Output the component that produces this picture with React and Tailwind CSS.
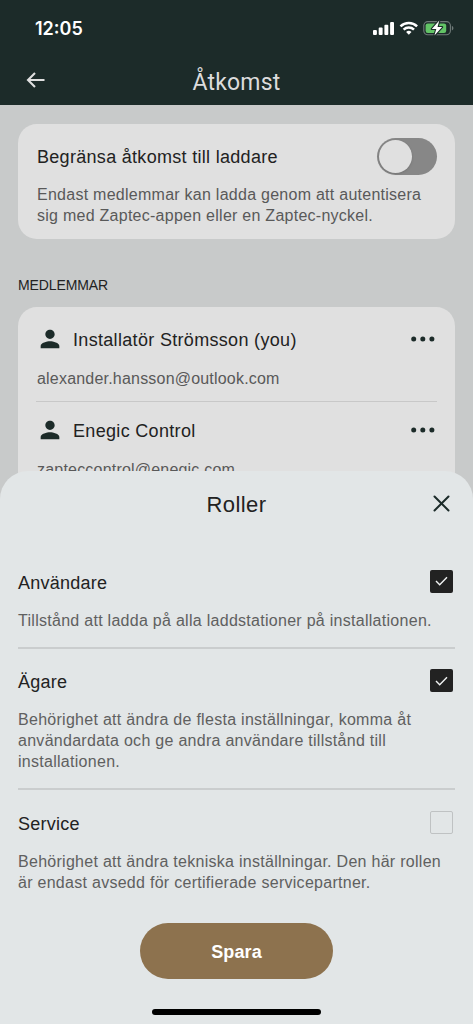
import { useState } from 'react'
import clsx from 'clsx'

const MEMBERS = [
  { name: 'Installatör Strömsson (you)', email: 'alexander.hansson@outlook.com' },
  { name: 'Enegic Control', email: 'zapteccontrol@enegic.com' },
]

const ROLES = [
  {
    id: 'user',
    title: 'Användare',
    lines: ['Tillstånd att ladda på alla laddstationer på installationen.'],
  },
  {
    id: 'owner',
    title: 'Ägare',
    lines: [
      'Behörighet att ändra de flesta inställningar, komma åt',
      'användardata och ge andra användare tillstånd till',
      'installationen.',
    ],
  },
  {
    id: 'service',
    title: 'Service',
    lines: [
      'Behörighet att ändra tekniska inställningar. Den här rollen',
      'är endast avsedd för certifierade servicepartner.',
    ],
  },
]

function StatusIcons() {
  return (
    <svg width="82" height="16" viewBox="0 0 82 16" fill="none">
      {/* Signal */}
      <g fill="#fff">
        <rect x="1" y="10" width="3.9" height="5" rx="1" />
        <rect x="6.7" y="7.6" width="3.9" height="7.4" rx="1" />
        <rect x="12.4" y="4.8" width="3.9" height="10.2" rx="1" />
        <rect x="18.1" y="2" width="3.9" height="13" rx="1" />
      </g>
      {/* Wi-Fi */}
      <g stroke="#fff" strokeWidth="2.5">
        <path d="M28.5 6.3a12 12 0 0 1 16.6 0" />
        <path d="M31.6 9.7a7.5 7.5 0 0 1 10.4 0" />
      </g>
      <path d="M36.8 14.8l-2.7-2.8a4 4 0 0 1 5.4 0z" fill="#fff" />
      {/* Battery, charging */}
      <rect x="51.8" y="1.6" width="26.6" height="13.2" rx="4" stroke="#6f7a78" strokeWidth="1.1" />
      <path d="M79.9 6v4.4c1-.4 1.5-1.2 1.5-2.2s-.5-1.8-1.5-2.2z" fill="#6f7a78" />
      <rect x="53.6" y="3.4" width="20.6" height="9.6" rx="2.2" fill="#62c466" />
      <path
        d="M67.3.6l-7.5 8.4h4.5l-1.9 6.6 7.7-8.5h-4.6z"
        fill="#fff"
        stroke="#1c2b29"
        strokeWidth="2.2"
        strokeLinejoin="round"
        paintOrder="stroke"
      />
    </svg>
  )
}

function ArrowLeft() {
  return (
    <svg width="20" height="16" viewBox="0 0 20 16" fill="none" stroke="#e0e0e0" strokeWidth="2.1">
      <path d="M9 1L2 8l7 7M2 8h16.5" />
    </svg>
  )
}

function PersonIcon() {
  return (
    <svg width="28" height="28" viewBox="0 0 24 24" fill="#1c2b29">
      <path d="M12 12c2.21 0 4-1.79 4-4s-1.79-4-4-4-4 1.79-4 4 1.79 4 4 4zm0 2c-2.67 0-8 1.34-8 4v2h16v-2c0-2.66-5.33-4-8-4z" />
    </svg>
  )
}

function MoreIcon() {
  return (
    <svg width="26" height="6" viewBox="0 0 26 6" fill="#1c2b29">
      <circle cx="2.7" cy="3" r="2.5" />
      <circle cx="11.8" cy="3" r="2.5" />
      <circle cx="20.9" cy="3" r="2.5" />
    </svg>
  )
}

function Checkbox({ checked, onChange }) {
  return (
    <button
      type="button"
      role="checkbox"
      aria-checked={checked}
      onClick={onChange}
      className={clsx(
        'flex h-[23px] w-[23px] shrink-0 items-center justify-center rounded-[2px]',
        checked ? 'bg-[#222222]' : 'border border-[#bfc2c3]'
      )}
    >
      {checked && (
        <svg width="13" height="10" viewBox="0 0 13 10" fill="none" stroke="#f0f2f2" strokeWidth="1.4">
          <path d="M1 5l3.7 3.7L12 1.2" />
        </svg>
      )}
    </button>
  )
}

function Member({ name, email, last }) {
  return (
    <div className={clsx('h-[91px] pt-[14px]', !last && 'border-b border-[#c8c8c8]')}>
      <div className="flex h-7 items-center">
        <PersonIcon />
        <span className="ml-[9px] flex-1 pt-[2px] text-lg leading-7 tracking-[0.32px] text-[#222222]">{name}</span>
        <MoreIcon />
      </div>
      <p className="mt-[15px] pl-px text-base leading-[21px] tracking-[0.2px] text-[#595959]">{email}</p>
    </div>
  )
}

function Role({ title, lines, checked, onChange, last }) {
  return (
    <div className={clsx('pb-4', !last && 'border-b-2 border-[#cacdce]')}>
      <div className="flex h-6 items-start justify-between pr-[2px]">
        <h3 className="pt-px text-lg leading-6 tracking-[0.25px] text-[#222222]">{title}</h3>
        <Checkbox checked={checked} onChange={onChange} />
      </div>
      <p className="mt-4 text-base leading-[21px] tracking-[0.28px] text-[#5f6060]">
        {lines.map((line) => (
          <span key={line} className="block whitespace-nowrap">
            {line}
          </span>
        ))}
      </p>
    </div>
  )
}

export default function App() {
  const [selected, setSelected] = useState(['user', 'owner'])

  const toggle = (id) =>
    setSelected((prev) => (prev.includes(id) ? prev.filter((r) => r !== id) : [...prev, id]))

  return (
    <div className="relative h-[1024px] w-full overflow-hidden bg-[#c8caca] font-['Liberation_Sans',Arial,sans-serif]">
      <header className="h-[105px] bg-[#1c2b29]">
        <div className="flex h-14 items-center justify-between pl-[35px] pr-[19px]">
          <span className="pt-[2px] font-[Inter,sans-serif] text-lg font-semibold text-white">12:05</span>
          <StatusIcons />
        </div>
        <div className="grid h-12 grid-cols-[60px_1fr_60px] items-center">
          <button type="button" className="pl-[26px]">
            <ArrowLeft />
          </button>
          <h1 className="pt-[6px] text-center font-[Roboto,sans-serif] text-[23px] tracking-[0.2px] text-[#dcdcdc]">
            Åtkomst
          </h1>
        </div>
      </header>

      <main className="px-[18px] pt-[18.5px]">
        <section className="h-[115px] rounded-[19px] bg-[#e0e0e0] px-[18px] pt-[14px]">
          <div className="flex h-[37px] items-center justify-between">
            <h2 className="pl-px pt-px text-lg tracking-[0.3px] text-[#222222]">Begränsa åtkomst till laddare</h2>
            <button type="button" role="switch" aria-checked="false" className="h-[37px] w-[60px] rounded-full bg-[#878787] p-[2px]">
              <span className="block h-[33px] w-[33px] rounded-full bg-[#e0e0e0] shadow-sm" />
            </button>
          </div>
          <p className="mt-[9.5px] pl-px text-base leading-[21px] tracking-[0.26px] text-[#595959]">
            <span className="block whitespace-nowrap">Endast medlemmar kan ladda genom att autentisera</span>
            <span className="block whitespace-nowrap">sig med Zaptec-appen eller en Zaptec-nyckel.</span>
          </p>
        </section>

        <h2 className="mt-[36.5px] text-sm leading-5 tracking-[-0.1px] text-[#222222]">MEDLEMMAR</h2>

        <section className="mt-3 rounded-[19px] bg-[#e0e0e0] px-[18px] pb-8 pt-[4px]">
          {MEMBERS.map((m, i) => (
            <Member key={m.email} {...m} last={i === MEMBERS.length - 1} />
          ))}
        </section>
      </main>

      {/* Bottom sheet */}
      <div className="absolute inset-x-0 bottom-0 flex h-[553px] flex-col rounded-t-[28px] bg-[#e2e6e7] px-[18px]">
        <div className="grid h-[68px] grid-cols-[24px_1fr_24px] items-center">
          <h2 className="col-start-2 pb-[2px] text-center text-[22px] tracking-[0.4px] text-[#222222]">Roller</h2>
          <button type="button" className="pb-[4px] pl-[2px]">
            <svg width="17" height="17" viewBox="0 0 17 17" fill="none" stroke="#1c2b29" strokeWidth="2" strokeLinecap="round">
              <path d="M1.5 1.5l14 14M15.5 1.5l-14 14" />
            </svg>
          </button>
        </div>
        <div className="mt-[30.5px] flex flex-col gap-[20.5px]">
          {ROLES.map((r, i) => (
            <Role
              key={r.id}
              title={r.title}
              lines={r.lines}
              checked={selected.includes(r.id)}
              onChange={() => toggle(r.id)}
              last={i === ROLES.length - 1}
            />
          ))}
        </div>
        <button
          type="button"
          className="mt-[14.5px] h-14 w-[193px] self-center rounded-full bg-[#8d724e] pt-[2px] text-lg font-bold tracking-[0.1px] text-white"
        >
          Spara
        </button>
        <div className="mt-[30px] h-[6px] w-[169px] self-center rounded-full bg-black" />
      </div>
    </div>
  )
}
